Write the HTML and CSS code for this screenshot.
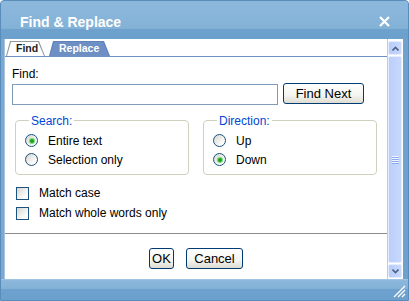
FILE: index.html
```html
<!DOCTYPE html>
<html lang="en">
<head>
  <meta charset="UTF-8" />
  <title>Find &amp; Replace</title>
  <link rel="stylesheet" href="styles.css">
</head>
<body>

  <div class="window">
    <div class="titlebar">
      <span class="title">Find &amp; Replace</span>
      <svg class="close" width="11" height="11" viewBox="0 0 11 11">
        <path d="M1 1L10 10M10 1L1 10" stroke="#fff" stroke-width="2.2" fill="none"/>
      </svg>
    </div>

    <div class="middle">
      <div class="content">
        <div class="tabs">
          <span class="tab tab-find">Find</span>
          <span class="tab tab-replace active">Replace</span>
        </div>

        <div class="panel">
          <label class="find-label" for="find-text">Find:</label>
          <div class="find-row">
            <input id="find-text" type="text">
            <button class="btn find-next">Find Next</button>
          </div>

          <div class="groups">
            <fieldset class="group">
              <legend>Search:</legend>
              <div class="option"><span class="radio checked"></span>Entire text</div>
              <div class="option"><span class="radio"></span>Selection only</div>
            </fieldset>
            <fieldset class="group">
              <legend>Direction:</legend>
              <div class="option"><span class="radio"></span>Up</div>
              <div class="option"><span class="radio checked"></span>Down</div>
            </fieldset>
          </div>

          <div class="checks">
            <div class="option check"><span class="checkbox"></span>Match case</div>
            <div class="option check"><span class="checkbox"></span>Match whole words only</div>
          </div>
        </div>

        <div class="footer">
          <button class="btn btn-ok">OK</button>
          <button class="btn btn-cancel">Cancel</button>
        </div>
      </div>

      <div class="scrollbar">
        <div class="sb-btn">
          <svg width="7" height="5" viewBox="0 0 7 5"><path d="M0.5 4.5L3.5 1.5L6.5 4.5" stroke="#4d6185" stroke-width="1.6" fill="none"/></svg>
        </div>
        <div class="sb-thumb"><span class="grip"></span></div>
        <div class="sb-btn">
          <svg width="7" height="5" viewBox="0 0 7 5"><path d="M0.5 0.5L3.5 3.5L6.5 0.5" stroke="#4d6185" stroke-width="1.6" fill="none"/></svg>
        </div>
      </div>
    </div>

    <div class="statusbar">
      <svg class="resize" width="13" height="13" viewBox="0 0 13 13">
        <path d="M12 1L1 12M12 5L5 12M12 9L9 12" stroke="#fff" stroke-width="1.3" fill="none"/>
      </svg>
    </div>
  </div>

</body>
</html>
```

FILE: styles.css
```css
* {
  box-sizing: border-box;
}

body {
  margin: 0;
  font-family: "Liberation Sans", Arial, sans-serif;
  font-size: 12px;
  color: #000;
}

.window {
  width: 409px;
  height: 301px;
  display: flex;
  flex-direction: column;
  background: #6fa1ce;
  border: 1px solid #5a8cbb;
  border-radius: 4px 4px 0 0;
  overflow: hidden;
}

.titlebar {
  height: 38px;
  display: flex;
  align-items: center;
  justify-content: space-between;
  padding: 3px 18px 0 19px;
  background: linear-gradient(#8cb8dc, #84b2d7 72%, #6ea1cd 75%, #6ca0cd);
  color: #fff;
}

.title {
  font-weight: bold;
  font-size: 14px;
}

.middle {
  flex: 1;
  display: flex;
  padding: 0 5px 0 3px;
  background: linear-gradient(90deg, #7aaad4, #6fa1ce);
}

.content {
  flex: 1;
  display: flex;
  flex-direction: column;
  background: #fff;
  border-left: 1px solid #a9c3dd;
  border-right: 1px solid #c9c9c9;
}

/* tabs */
.tabs {
  height: 18px;
  display: flex;
  align-items: flex-end;
  padding-left: 1px;
  border-bottom: 1px solid #6d8fc4;
}

.tab {
  position: relative;
  z-index: 0;
  height: 15px;
  padding-left: 10px;
  font-size: 10.5px;
  font-weight: bold;
  line-height: 15px;
  color: #222;
}

.tab::before,
.tab::after {
  content: '';
  position: absolute;
  z-index: -1;
  clip-path: polygon(0 100%, 4px 0, calc(100% - 6px) 0, 100% 100%);
}

.tab::before {
  inset: 0;
  background: #919b9c;
}

.tab::after {
  inset: 1px 1px 0 1px;
  background: #fff;
}

.tab-find {
  width: 39px;
}

.tab-replace {
  width: 61px;
  margin-left: 4px;
}

.tab.active {
  color: #fff;
}

.tab.active::before {
  background: #5f82ba;
}

.tab.active::after {
  background: #6d8fc4;
}

/* panel */
.panel {
  padding: 10px 0 0 7px;
}

.find-label {
  display: block;
  line-height: 14px;
}

.find-row {
  display: flex;
  gap: 5px;
  margin-top: 3px;
}

.find-row input {
  width: 266px;
  height: 21px;
  margin: 0;
  padding: 0 3px;
  border: 1px solid #7f9db9;
  font: inherit;
}

.btn {
  height: 21px;
  padding: 0;
  border: 1px solid #003c74;
  border-radius: 3px;
  background: linear-gradient(#fff, #f4f4f0 60%, #dedcd2);
  font-family: inherit;
  font-size: 13px;
  color: #000;
}

.find-next {
  width: 81px;
  margin-top: -1px;
}

.groups {
  display: flex;
  gap: 14px;
  margin: 7px 0 0 3px;
}

.group {
  width: 174px;
  margin: 0;
  padding: 3px 0 5px 9px;
  border: 1px solid #d0d0bf;
  border-radius: 4px;
}

.group legend {
  margin-left: 4px;
  padding: 2px 2px 0;
  line-height: 14px;
  color: #0046d5;
}

.option {
  display: flex;
  align-items: center;
  gap: 10px;
  height: 19px;
}

.radio {
  width: 13px;
  height: 13px;
  display: flex;
  align-items: center;
  justify-content: center;
  border: 1px solid #1c5180;
  border-radius: 50%;
  background: linear-gradient(135deg, #d6d6cf, #fff 80%);
}

.radio.checked::after {
  content: '';
  width: 4px;
  height: 4px;
  border-radius: 50%;
  background: #21a121;
  box-shadow: 0 0 1px 1px #6fd66f;
}

.checks {
  margin: 8px 0 0 4px;
}

.check {
  height: 20px;
}

.checkbox {
  width: 13px;
  height: 13px;
  border: 1px solid #1c5180;
  background: linear-gradient(135deg, #d6d6cf, #fff 80%);
}

.footer {
  display: flex;
  justify-content: center;
  gap: 12px;
  margin-top: 10px;
  padding-top: 14px;
  border-top: 1px solid #8c8c8c;
}

.btn-ok {
  width: 25px;
}

.btn-cancel {
  width: 57px;
}

/* scrollbar */
.scrollbar {
  width: 15px;
  display: flex;
  flex-direction: column;
  gap: 1px;
  padding: 2px 1px 1px 0;
  background: #fff;
}

.sb-btn {
  height: 14px;
  display: flex;
  align-items: center;
  justify-content: center;
  border: 1px solid #e4ecfd;
  border-radius: 2px;
  background: linear-gradient(90deg, #b8ccfa, #c9d9fd);
}

.sb-thumb {
  flex: 1;
  display: flex;
  align-items: center;
  justify-content: center;
  border: 1px solid #e4ecfd;
  border-radius: 2px;
  background: linear-gradient(90deg, #bbcefb, #c8d8fd);
}

.grip {
  width: 7px;
  height: 8px;
  background: repeating-linear-gradient(#eef3fe 0 1px, #8eaaf0 1px 2px);
}

.statusbar {
  height: 21px;
  display: flex;
  justify-content: flex-end;
  align-items: flex-end;
  padding: 0 2px 2px 0;
  background: linear-gradient(#a9c9e6, #8ab6da 8%, #84b2d7 45%, #6ea1cd 50%, #6ca0cd);
}
```
